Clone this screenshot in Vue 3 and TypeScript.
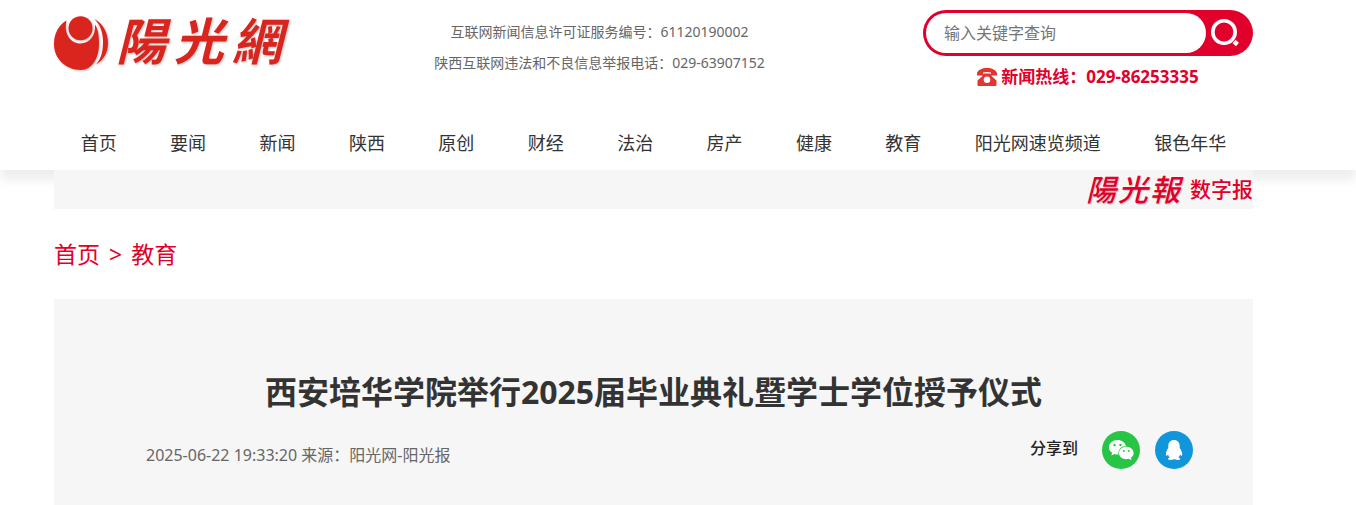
<script setup lang="ts">
import { ref } from 'vue'

const channels: string[] = [
  '首页', '要闻', '新闻', '陕西', '原创', '财经',
  '法治', '房产', '健康', '教育', '阳光网速览频道', '银色年华',
]
const keyword = ref<string>('')
</script>

<template>
  <div class="page">
    <header class="header">
      <div class="wrap top">
        <a class="logo" href="#" aria-label="陽光網">
          <svg class="emblem" viewBox="0 0 54 56" aria-hidden="true">
            <path d="M12.500 4.500C5 9 0 17 0 28C0 43 12 54 27 54C38 54 45 42 45 28C45 19 44 13 41 8.500C42 19 35.500 27.500 26.500 27.500C16 27.500 9.500 17 12.500 4.500Z" />
            <circle cx="26.500" cy="12.300" r="12" />
            <path d="M40 3C49 7 54 17 54 27C54 37 49.500 44 42 48.500C47 43 49 36 49 26C49 16 46 8 40 3Z" />
          </svg>
          <span class="brand"><i>陽</i><i>光</i><i>網</i></span>
        </a>
        <div class="licence">
          <p>互联网新闻信息许可证服务编号：61120190002</p>
          <p>陕西互联网违法和不良信息举报电话：029-63907152</p>
        </div>
        <div class="tools">
          <form class="search" @submit.prevent>
            <input v-model="keyword" type="text" placeholder="输入关键字查询" aria-label="输入关键字查询">
            <button type="submit" aria-label="搜索">
              <svg viewBox="0 0 30 30" aria-hidden="true">
                <circle cx="14" cy="14" r="11.200" fill="none" stroke="#fff" stroke-width="3.600" />
                <path d="M24 23.500L27.500 26.500" fill="none" stroke="#fff" stroke-width="4.500" />
              </svg>
            </button>
          </form>
          <p class="hotline">
            <svg viewBox="0 0 20 18" aria-hidden="true">
              <path d="M0 7.500V5C1 2 5 0 10 0S19 2 20 5V7.500H14V4.500C12 3.700 8 3.700 6 4.500V7.500Z" />
              <path fill-rule="evenodd" d="M6.500 5.500H13.500L15 8.500L19.500 12.500V17Q19.500 18 18.500 18H1.500Q.5 18 .5 17V12.500L5 8.500ZM10 8.500A3.300 3.300 0 1 0 10 15.100A3.300 3.300 0 1 0 10 8.500Z" />
            </svg>
            <span>新闻热线：029-86253335</span>
          </p>
        </div>
      </div>
      <nav class="wrap nav">
        <a v-for="name in channels" :key="name" href="#">{{ name }}</a>
      </nav>
    </header>

    <main class="wrap">
      <div class="paper">
        <a href="#">
          <span class="paper-brand"><i>陽</i><i>光</i><i>報</i></span>
          <span class="paper-name">数字报</span>
        </a>
      </div>
      <div class="crumbs">
        <a href="#">首页</a><span>&gt;</span><a href="#">教育</a>
      </div>
      <article class="article">
        <h1>西安培华学院举行2025届毕业典礼暨学士学位授予仪式</h1>
        <div class="meta">
          <p>2025-06-22 19:33:20 来源：阳光网-阳光报</p>
          <div class="share">
            <span>分享到</span>
            <button class="wechat" type="button" aria-label="微信">
              <svg viewBox="0 0 38 38" aria-hidden="true">
                <path d="M15.500 9C10.500 9 7 12.200 7 16.200C7 18.600 8.200 20.500 10.200 21.800L9.300 24.500L12.500 22.900C14 23.400 15.300 23.500 16.500 23.400C15.800 18.500 19.500 15 24 15C23 11.500 19.800 9 15.500 9Z" />
                <path d="M24.200 15.800C20.200 15.800 17 18.500 17 22C17 25.500 20.200 28.200 24.200 28.200C25.200 28.200 26 28 26.900 27.700L29.500 29.200L28.900 26.800C30.700 25.600 31.600 23.900 31.600 22C31.600 18.500 28.200 15.800 24.200 15.800Z" />
                <g fill="#28c445">
                  <circle cx="12.500" cy="14" r="1.200" /><circle cx="18.500" cy="14" r="1.200" />
                  <circle cx="21.800" cy="20" r="1" /><circle cx="26.800" cy="20" r="1" />
                </g>
              </svg>
            </button>
            <button class="qq" type="button" aria-label="QQ">
              <svg viewBox="0 0 38 38" aria-hidden="true">
                <path d="M19 9C15.500 9 13.300 11.500 13.300 15V17C11.800 19 10.800 21.500 10.900 23.500C11 25.500 12 25 13 23.500C13.400 24.800 14 25.700 14.800 26.400C13.400 26.800 12.900 27.300 13 28C13.300 29.200 17.500 29.200 19 28C20.500 29.200 24.900 29.200 25.200 28C25.300 27.300 24.700 26.800 23.300 26.400C24.100 25.700 24.700 24.800 25.100 23.500C26.100 25 27.100 25.500 27.200 23.500C27.300 21.500 26.200 19 24.700 17V15C24.700 11.500 22.500 9 19 9Z" />
              </svg>
            </button>
          </div>
        </div>
      </article>
    </main>
  </div>
</template>

<style>
body {
  margin: 0;
  background: #fff;
}
</style>

<style scoped>
.page {
  font-family: "Noto Sans", "Noto Sans CJK SC", sans-serif;
  color: #333;
}
p, h1 {
  margin: 0;
}
a {
  color: inherit;
  text-decoration: none;
}
button {
  border: 0;
  padding: 0;
  cursor: pointer;
}
svg {
  display: block;
}
.wrap {
  margin: 0 103px 0 54px;
}
.header {
  background: #fff;
  box-shadow: 0 10px 10px rgba(0, 0, 0, 0.07);
}
.top {
  display: grid;
  grid-template-columns: 234px 1fr 330px;
  height: 116px;
}
.logo {
  display: flex;
  gap: 8px;
  padding-top: 10px;
  color: #d9251d;
  filter: drop-shadow(1px 1px 1px rgba(0, 0, 0, 0.25));
}
.emblem {
  width: 54px;
  height: 56px;
  margin-top: 6px;
  fill: currentColor;
}
.brand {
  display: flex;
  gap: 8px;
  font-family: "Noto Sans CJK TC", sans-serif;
  font-size: 50px;
  font-weight: 700;
  line-height: 56px;
}
.licence {
  padding: 16px 12px 0 0;
  text-align: center;
  font-size: 14px;
  line-height: 31px;
  color: #666;
  white-space: nowrap;
}
.tools {
  padding-top: 10px;
}
.search {
  display: flex;
  box-sizing: border-box;
  height: 46px;
  padding: 3px;
  border-radius: 23px;
  background: #e1002b;
}
.search input {
  flex: 1;
  min-width: 0;
  border: 0;
  border-radius: 20px;
  padding: 0 18px;
  outline: 0;
  background: #fff;
  font-family: inherit;
  font-size: 16px;
  color: #333;
}
.search input::placeholder {
  color: #757575;
}
.search button {
  width: 44px;
  background: none;
}
.search button svg {
  width: 30px;
  height: 30px;
  margin-left: 4px;
}
.hotline {
  display: flex;
  align-items: center;
  justify-content: center;
  gap: 4px;
  padding-top: 9px;
  font-size: 17px;
  font-weight: 700;
  line-height: 24px;
  color: #e1002b;
}
.hotline svg {
  width: 20px;
  height: 18px;
  fill: #e3342f;
}
.nav {
  display: flex;
  justify-content: space-around;
  font-size: 18px;
  line-height: 54px;
  white-space: nowrap;
}
.paper {
  position: relative;
  display: flex;
  justify-content: flex-end;
  height: 39px;
  background: #f6f6f6;
  color: #e1002b;
}
.paper a {
  display: flex;
  gap: 10px;
}
.paper-brand {
  display: flex;
  gap: 2px;
  font-family: "Noto Sans CJK TC", sans-serif;
  font-size: 30px;
  font-weight: 500;
  line-height: 36px;
  text-shadow: 1px 1px 1px rgba(0, 0, 0, 0.2);
}
.paper-name {
  font-size: 21px;
  font-weight: 500;
  line-height: 38px;
}
.crumbs {
  display: flex;
  gap: 9px;
  padding: 27px 0;
  font-size: 23px;
  line-height: 36px;
  color: #e1002b;
}
.article {
  padding: 70px 0 36px;
  background: #f6f6f6;
}
.article h1 {
  text-align: center;
  font-size: 32px;
  font-weight: 700;
  line-height: 46px;
}
.meta {
  display: flex;
  justify-content: space-between;
  padding: 16px 60px 0 92px;
  font-size: 16px;
  color: #666;
}
.meta p {
  padding-top: 12px;
  line-height: 24px;
}
.share {
  display: flex;
  gap: 15px;
}
.share span {
  margin-right: 9px;
  font-weight: 500;
  line-height: 34px;
  color: #222;
}
.share button {
  width: 38px;
  height: 38px;
  border-radius: 50%;
}
.share svg {
  width: 38px;
  height: 38px;
  fill: #fff;
}
.wechat {
  background: #28c445;
}
.qq {
  background: #1296db;
}
</style>
